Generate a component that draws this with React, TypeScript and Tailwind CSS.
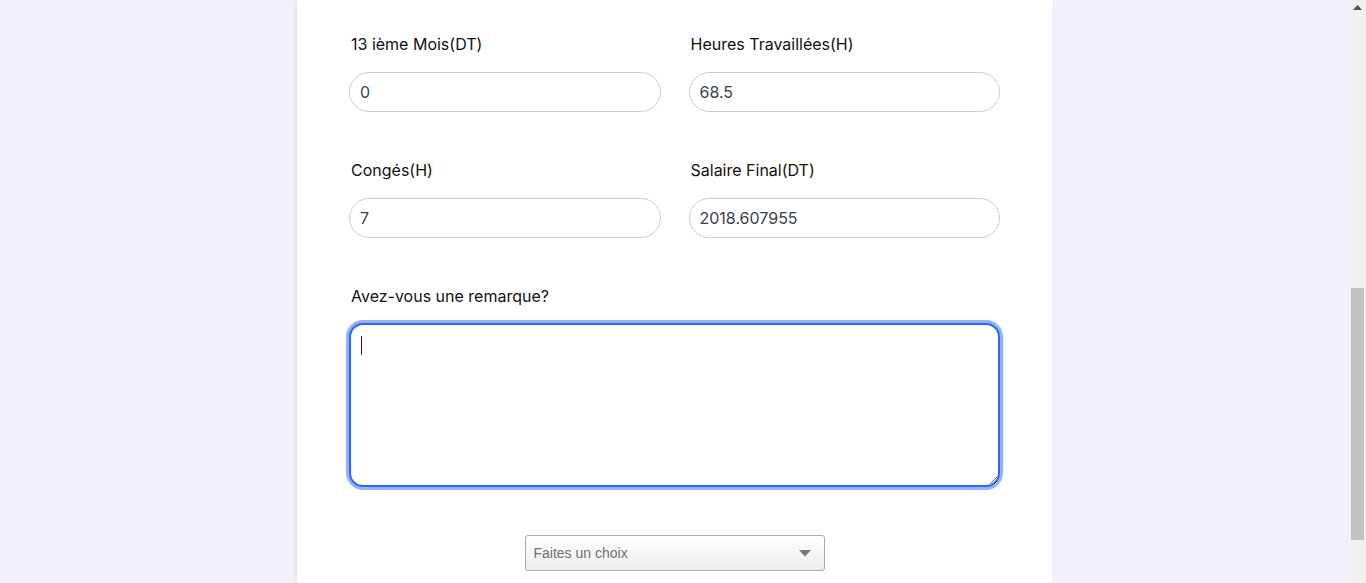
import React from 'react';

const Field = ({ label, value }: { label: string; value: string }) => (
  <div className="flex flex-col">
    <label className="text-[16px] leading-6 text-[#111] pl-[2px]">{label}</label>
    <input
      readOnly
      value={value}
      className="mt-4 h-10 w-full rounded-full border border-[#c8ccd8] bg-white px-[10px] text-[16px] text-[#3a404b] outline-none"
    />
  </div>
);

export default function App() {
  return (
    <div className="flex h-[583px] w-full overflow-hidden bg-[#f0f1fb]" style={{ fontFamily: 'Inter, "Noto Sans", sans-serif' }}>
      {/* page */}
      <div className="flex flex-1 justify-center">
        <div className="w-[755px] bg-white px-[52px] pt-8 shadow-[-2px_0_4px_rgba(200,205,240,0.35)]">
          <div className="grid grid-cols-2 gap-x-[28px] gap-y-[46px]">
            <Field label="13 ième Mois(DT)" value="0" />
            <Field label="Heures Travaillées(H)" value="68.5" />
            <Field label="Congés(H)" value="7" />
            <Field label="Salaire Final(DT)" value="2018.607955" />
          </div>

          <div className="mt-[46px] flex flex-col">
            <label className="text-[16px] leading-6 text-[#111] pl-[2px]">Avez-vous une remarque?</label>
            <div className="relative mt-[15px]">
              <textarea
                className="block h-[164px] w-full resize-y rounded-[14px] border-2 border-[#2d68f5] bg-white px-2 py-2 text-[16px] outline-none shadow-[0_0_0_3px_#93b2fb]"
              />
              <span className="pointer-events-none absolute left-[12px] top-[13px] h-[19px] w-px bg-[#222]" />
            </div>
          </div>

          <div className="mt-[48px] flex justify-center">
            <div
              className="flex h-9 w-[300px] items-center justify-between rounded-[3px] border border-[#aaa] bg-gradient-to-b from-white to-[#eeeeee] pl-2 pr-[13px] text-[14px] text-[#707070]"
              style={{ fontFamily: '"Liberation Sans", Arial, sans-serif' }}
            >
              <span>Faites un choix</span>
              <svg width="12" height="7" viewBox="0 0 12 7">
                <path d="M0 0h12L6 6.5z" fill="#777" />
              </svg>
            </div>
          </div>
        </div>
      </div>

      {/* scrollbar */}
      <div className="flex w-[17px] flex-col items-center bg-[#f1f1f1]">
        <svg className="mt-[5px]" width="9" height="6" viewBox="0 0 9 6">
          <path d="M4.5 0L9 5H0z" fill="#505050" />
        </svg>
        <div className="mt-[277px] h-[252px] w-[13px] bg-[#c1c1c1]" />
      </div>
    </div>
  );
}
